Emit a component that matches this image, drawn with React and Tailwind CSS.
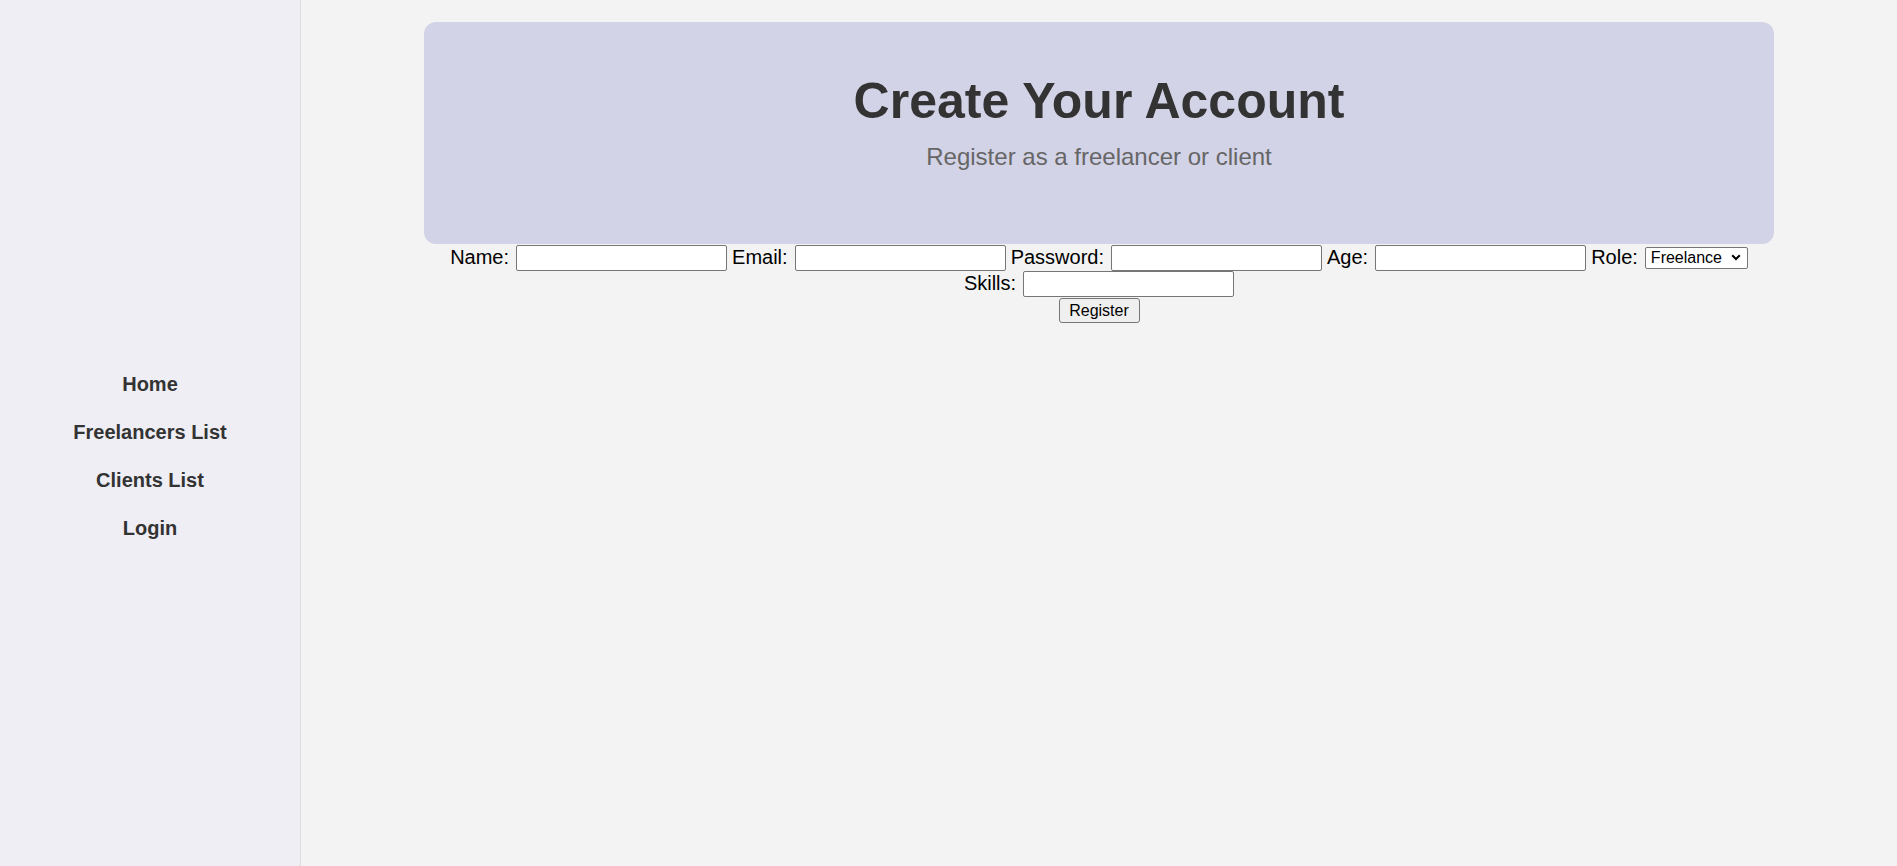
import { useState } from 'react';

const navLinks = ['Home', 'Freelancers List', 'Clients List', 'Login'];

const Field = ({ label, children }) => (
  <div className="flex items-center gap-[7px]">
    <label className="text-[20px] leading-[22px] text-black -mt-[3px]">{label}</label>
    {children}
  </div>
);

const TextInput = ({ type = 'text', name, value, onChange }) => (
  <input
    type={type}
    name={name}
    value={value}
    onChange={onChange}
    className="w-[211px] h-[26px] bg-white border border-[#767676] rounded-[2px] px-[3px] text-[16px] text-black outline-none"
  />
);

const App = () => {
  const [formData, setFormData] = useState({
    name: '',
    email: '',
    password: '',
    age: '',
    role: 'freelance',
    skills: ''
  });

  const handleChange = (e) => {
    const { name, value } = e.target;
    setFormData(prev => ({ ...prev, [name]: value }));
  };

  const handleSubmit = (e) => {
    e.preventDefault();
  };

  return (
    <div
      className="flex h-[866px] w-full bg-[#f3f3f3]"
      style={{ fontFamily: '"Liberation Sans", Arial, sans-serif' }}
    >
      {/* Sidebar */}
      <aside className="w-[301px] shrink-0 h-full bg-[#efeef5] border-r border-[#dcdce2]">
        <nav className="flex flex-col items-center gap-[24px] pt-[372px]">
          {navLinks.map(link => (
            <a
              key={link}
              href="#"
              className="text-[20px] leading-[24px] font-bold text-[#333]"
            >
              {link}
            </a>
          ))}
        </nav>
      </aside>

      {/* Main */}
      <main className="flex-1 flex flex-col items-center">
        <div className="w-[1350px] mt-[22px] bg-[#d3d3e7] rounded-[12px] pt-[51px] pb-[73px] text-center">
          <h1 className="text-[50px] leading-[57px] font-bold text-[#333]">
            Create Your Account
          </h1>
          <p className="mt-[13px] text-[24px] leading-[28px] text-[#666]">
            Register as a freelancer or client
          </p>
        </div>

        <form onSubmit={handleSubmit} className="flex flex-col items-center mt-[1px]">
          <div className="flex items-center justify-center gap-[5px] h-[26px]">
            <Field label="Name:">
              <TextInput name="name" value={formData.name} onChange={handleChange} />
            </Field>
            <Field label="Email:">
              <TextInput type="email" name="email" value={formData.email} onChange={handleChange} />
            </Field>
            <Field label="Password:">
              <TextInput type="password" name="password" value={formData.password} onChange={handleChange} />
            </Field>
            <Field label="Age:">
              <TextInput type="number" name="age" value={formData.age} onChange={handleChange} />
            </Field>
            <Field label="Role:">
              <div className="relative">
                <select
                  name="role"
                  value={formData.role}
                  onChange={handleChange}
                  className="appearance-none w-[103px] h-[22px] bg-white border border-[#767676] rounded-[2px] pl-[5px] pr-[18px] text-[16px] leading-[20px] text-black outline-none"
                >
                  <option value="freelance">Freelance</option>
                  <option value="client">Client</option>
                </select>
                <svg
                  className="absolute right-[7px] top-[8px] pointer-events-none"
                  width="10"
                  height="7"
                  viewBox="0 0 10 7"
                  fill="none"
                >
                  <polyline points="1.2,1.2 5,5 8.8,1.2" stroke="#000" strokeWidth="2" />
                </svg>
              </div>
            </Field>
          </div>

          <div className="flex items-center justify-center h-[26px]">
            <Field label="Skills:">
              <TextInput name="skills" value={formData.skills} onChange={handleChange} />
            </Field>
          </div>

          <button
            type="submit"
            className="mt-[1px] w-[81px] h-[25px] bg-[#efefef] border border-[#767676] rounded-[3px] text-[16px] leading-[20px] text-black"
          >
            Register
          </button>
        </form>
      </main>
    </div>
  );
};

export default App;
